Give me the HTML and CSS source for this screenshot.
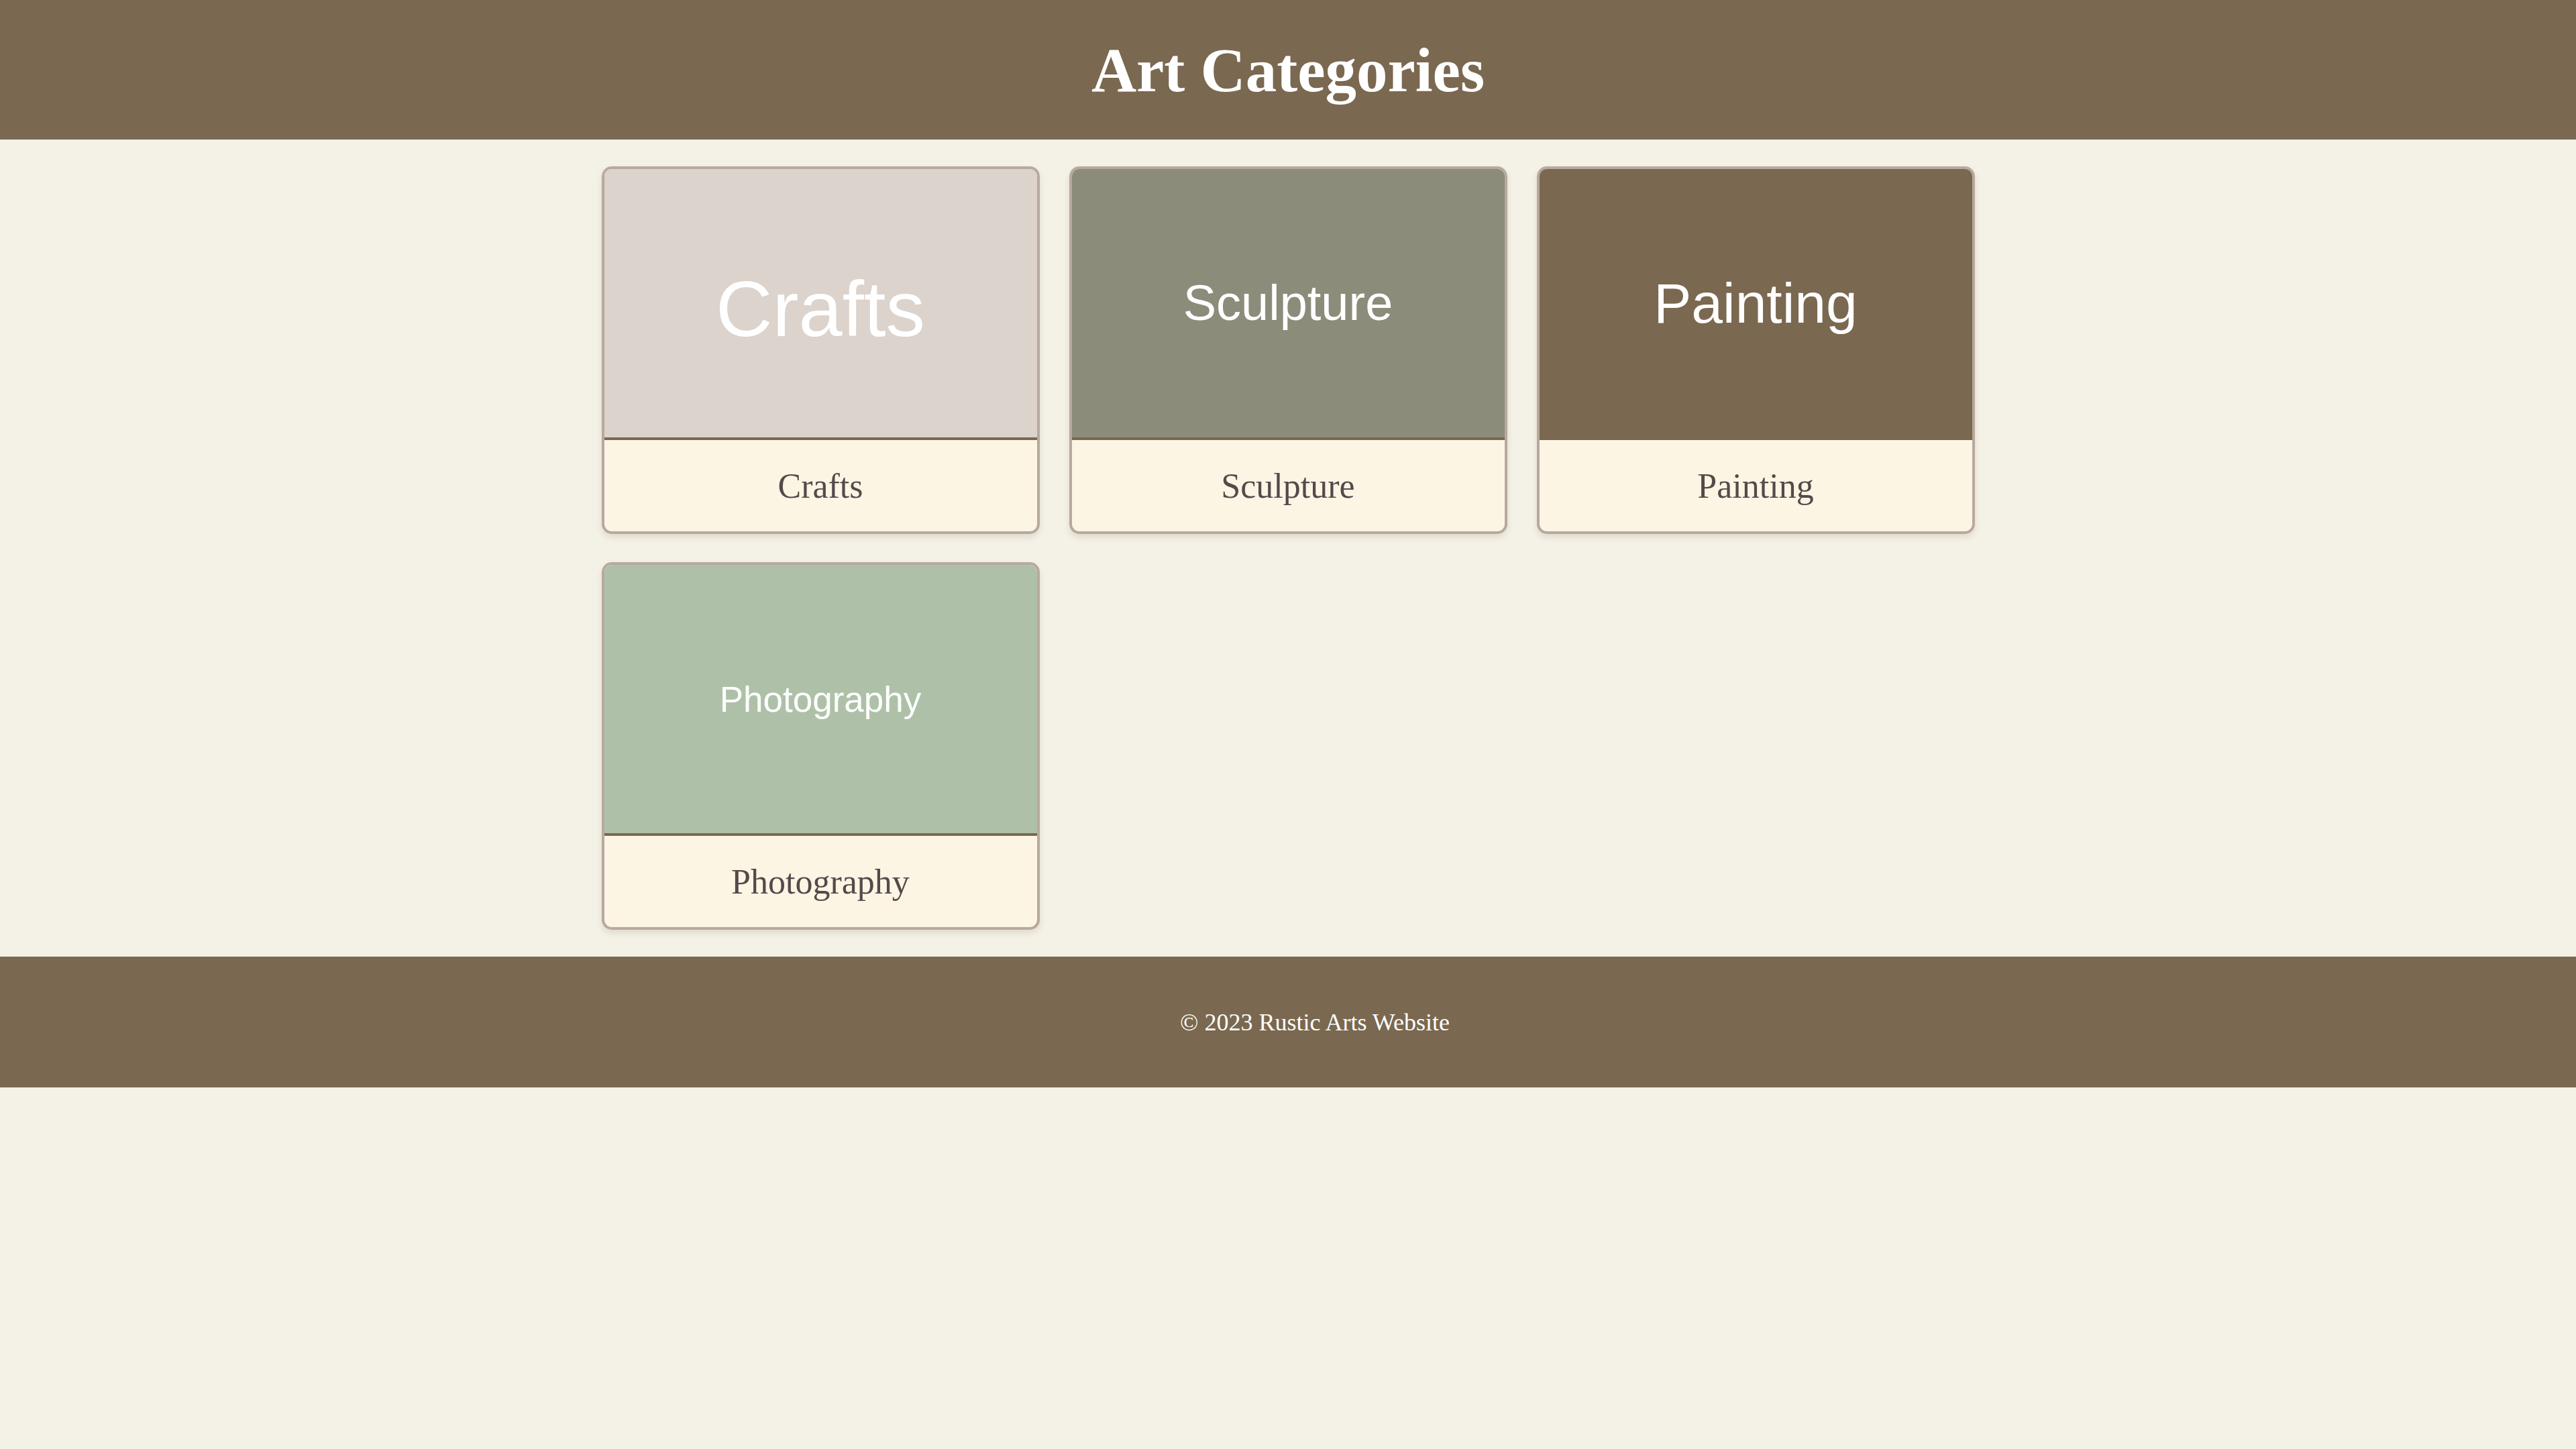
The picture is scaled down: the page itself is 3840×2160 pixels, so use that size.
FILE: index.html
```html
<!DOCTYPE html>
<html lang="en">
<head>
<meta charset="utf-8">
<title>Art Categories</title>
<link rel="stylesheet" href="styles.css">
</head>
<body>
<header class="site-header">
  <h1 class="site-title">Art Categories</h1>
</header>
<main class="content">
  <div class="grid">
    <div class="card">
      <div class="card-image img-crafts"><span class="ph ph-crafts">Crafts</span></div>
      <div class="card-label">Crafts</div>
    </div>
    <div class="card">
      <div class="card-image img-sculpture"><span class="ph ph-sculpture">Sculpture</span></div>
      <div class="card-label">Sculpture</div>
    </div>
    <div class="card">
      <div class="card-image img-painting"><span class="ph ph-painting">Painting</span></div>
      <div class="card-label">Painting</div>
    </div>
    <div class="card">
      <div class="card-image img-photography"><span class="ph ph-photography">Photography</span></div>
      <div class="card-label">Photography</div>
    </div>
  </div>
</main>
<footer class="site-footer">
  <p class="footer-text">© 2023 Rustic Arts Website</p>
</footer>
</body>
</html>
```

FILE: styles.css
```css
html, body {
  margin: 0;
  padding: 0;
}
body {
  background: #f4f1e6;
  font-family: "Liberation Serif", "DejaVu Serif", serif;
}
.site-header {
  background: #7a6850;
  height: 208px;
  display: flex;
  align-items: center;
  justify-content: center;
}
.site-title {
  margin: 0;
  color: #ffffff;
  font-size: 93px;
  font-weight: bold;
  line-height: 1;
}
.content {
  padding: 40px 0 40px;
}
.grid {
  display: grid;
  grid-template-columns: repeat(3, 653px);
  column-gap: 44px;
  row-gap: 42px;
  justify-content: center;
}
.card {
  border: 4px solid #b8a99e;
  border-radius: 15px;
  overflow: hidden;
  background: #fdf5e4;
  box-shadow: 0 5px 10px rgba(80, 60, 40, 0.12);
  display: flex;
  flex-direction: column;
}
.card-image {
  height: 400px;
  border-bottom: 4px solid #7a6850;
  display: flex;
  align-items: center;
  justify-content: center;
}
.img-crafts { background: #dbd3cc; }
.img-sculpture { background: #8c8c7a; }
.img-painting { background: #7a6850; }
.img-photography { background: #aec1a8; }
.ph {
  font-family: "Liberation Sans", Arial, sans-serif;
  color: #ffffff;
  line-height: 1;
}
.ph-crafts { font-size: 117px; padding-top: 16px; }
.ph-sculpture { font-size: 74px; }
.ph-painting { font-size: 84px; }
.ph-photography { font-size: 53px; }
.card-label {
  height: 136px;
  display: flex;
  align-items: center;
  justify-content: center;
  font-size: 52px;
  color: #554a4a;
}
.site-footer {
  background: #7a6850;
  height: 195px;
  box-sizing: border-box;
  padding-left: 80px;
  display: flex;
  align-items: center;
  justify-content: center;
}
.footer-text {
  margin: 0;
  color: #ffffff;
  font-size: 36px;
}
```
